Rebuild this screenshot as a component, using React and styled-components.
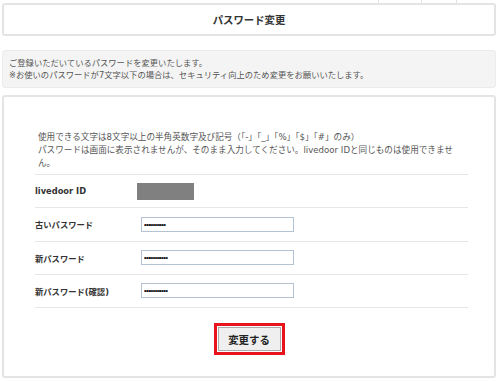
import React from "react";
import styled, { createGlobalStyle } from "styled-components";

const Global = createGlobalStyle`
  html, body { margin: 0; padding: 0; background: #fff; }
  body {
    font-family: "DejaVu Sans", "Noto Sans CJK JP", sans-serif;
    color: #333;
  }
`;

const Page = styled.div`
  width: 500px;
  padding: 0 4px 0 2px;
  box-sizing: border-box;
`;

const TabStrip = styled.div`
  display: flex;
  justify-content: flex-end;
  height: 3px;
  padding-right: 38px;
`;

const TabCell = styled.div`
  width: ${(p) => p.$w}px;
  border-left: 1px solid #e2e2e2;
`;

const Header = styled.div`
  height: 33px;
  box-sizing: border-box;
  border: 2px solid #e4e4e4;
  border-radius: 3px;
  display: flex;
  align-items: center;
  justify-content: center;
  font-family: "Noto Sans CJK JP", sans-serif;
  font-weight: 700;
  font-size: 10.4px;
  color: #333;
`;

const Notice = styled.div`
  margin-top: 14px;
  height: 38px;
  box-sizing: border-box;
  background: #f4f4f4;
  border: 1px solid #ececec;
  border-radius: 3px;
  padding: 6px 0 0 6px;
  font-family: "DejaVu Sans", "Noto Sans CJK JP", sans-serif;
  font-size: 8.3px;
  line-height: 12px;
  color: #555;
`;

const Line = styled.div`
  white-space: nowrap;
`;

const Main = styled.div`
  margin-top: 7px;
  height: 283px;
  box-sizing: border-box;
  border: 2px solid #e4e4e4;
  border-radius: 3px;
  padding: 34px 0 0 31px;
`;

const Rules = styled.div`
  width: 425px;
  padding-left: 3px;
  font-family: "DejaVu Sans", "Noto Sans CJK JP", sans-serif;
  font-size: 8.6px;
  line-height: 13px;
  color: #555;
`;

const Table = styled.div`
  width: 433px;
  margin-top: 4px;
  border-top: 1px solid #e6e6e6;
`;

const Row = styled.div`
  display: flex;
  align-items: center;
  height: 32.25px;
  border-bottom: 1px solid #e6e6e6;
`;

const Label = styled.div`
  width: 102px;
  font-family: "DejaVu Sans", "Noto Sans CJK JP", sans-serif;
  font-weight: 700;
  font-size: 8.3px;
  color: #333;
`;

const Masked = styled.div`
  width: 57px;
  height: 17px;
  background: #808080;
`;

const PassInput = styled.input`
  margin-left: 4px;
  width: 153px;
  height: 15px;
  box-sizing: border-box;
  border: 1px solid #b4c3d3;
  padding: 0 2px;
  font-family: "Liberation Sans", sans-serif;
  font-size: 7px;
  letter-spacing: -0.5px;
  color: #000;
  background: #fff;
  outline: none;
`;

const ButtonArea = styled.div`
  display: flex;
  justify-content: center;
  margin-top: 15px;
  padding-right: 31px;
`;

const Highlight = styled.div`
  border: 3px solid #e8141c;
  padding: 1px;
  display: flex;
`;

const Submit = styled.button`
  width: 63px;
  height: 24px;
  box-sizing: border-box;
  border: 1px solid #aaa;
  background: #efefef;
  font-family: "Noto Sans CJK JP", sans-serif;
  font-weight: 700;
  font-size: 10.4px;
  color: #222;
  padding: 0;
  cursor: pointer;
`;

const rows = [
  { label: "古いパスワード", value: "abcdefghijk" },
  { label: "新パスワード", value: "abcdefghijkl" },
  { label: "新パスワード(確認)", value: "abcdefghijkl" },
];

export default function App() {
  return (
    <Page>
      <Global />
      <TabStrip>
        <TabCell $w={42} />
        <TabCell $w={34} />
        <TabCell $w={1} />
      </TabStrip>
      <Header>パスワード変更</Header>
      <Notice>
        <Line>ご登録いただいているパスワードを変更いたします。</Line>
        <Line>※お使いのパスワードが7文字以下の場合は、セキュリティ向上のため変更をお願いいたします。</Line>
      </Notice>
      <Main>
        <Rules>
          使用できる文字は8文字以上の半角英数字及び記号（「-」「_」「%」「$」「#」のみ）
          <br />
          パスワードは画面に表示されませんが、そのまま入力してください。livedoor IDと同じものは使用できません。
        </Rules>
        <Table>
          <Row>
            <Label>livedoor ID</Label>
            <Masked />
          </Row>
          {rows.map((r) => (
            <Row key={r.label}>
              <Label>{r.label}</Label>
              <PassInput type="password" defaultValue={r.value} readOnly />
            </Row>
          ))}
        </Table>
        <ButtonArea>
          <Highlight>
            <Submit type="button">変更する</Submit>
          </Highlight>
        </ButtonArea>
      </Main>
    </Page>
  );
}
